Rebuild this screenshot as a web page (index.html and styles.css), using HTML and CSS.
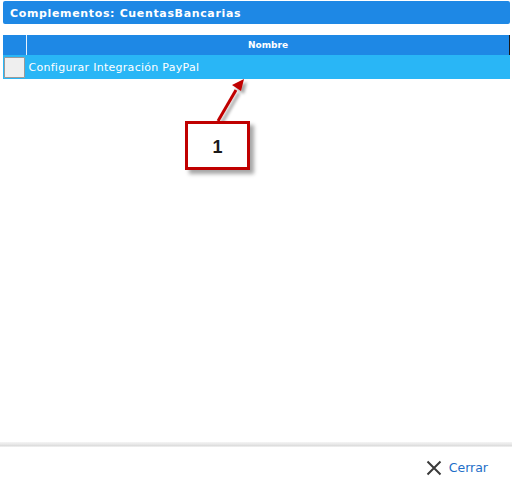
FILE: index.html
```html
<!DOCTYPE html>
<html lang="es">
<head>
<meta charset="utf-8">
<title>Complementos: CuentasBancarias</title>
<link rel="stylesheet" href="styles.css">
</head>
<body>
<div class="dialog">
  <div class="dialog-title">Complementos: CuentasBancarias</div>
  <div class="dialog-body">
    <table class="grid">
      <thead>
        <tr>
          <th class="col-check"></th>
          <th class="col-name">Nombre</th>
        </tr>
      </thead>
      <tbody>
        <tr class="selected">
          <td class="col-check"><span class="checkbox"></span></td>
          <td class="col-name">Configurar Integración PayPal</td>
        </tr>
      </tbody>
    </table>
  </div>
  <div class="dialog-footer">
    <button class="close-btn" type="button">
      <svg width="16" height="16" viewBox="0 0 16 16" aria-hidden="true">
        <path d="M1.5 1.5 L14.5 14.5 M14.5 1.5 L1.5 14.5" stroke="#3a3a3a" stroke-width="2" fill="none"/>
      </svg>
      <span>Cerrar</span>
    </button>
  </div>

  <!-- callout pointing at the selected row -->
  <svg class="callout-arrow" width="60" height="60" viewBox="0 0 60 60" aria-hidden="true">
    <defs>
      <filter id="arrowShadow" x="-30%" y="-30%" width="160%" height="160%">
        <feDropShadow dx="3" dy="3" stdDeviation="1.5" flood-color="#000" flood-opacity="0.35"/>
      </filter>
    </defs>
    <g filter="url(#arrowShadow)">
      <line x1="8" y1="46" x2="26" y2="15" stroke="#c00000" stroke-width="3"/>
      <polygon points="34,4 22,10 31,16" fill="#c00000"/>
    </g>
  </svg>
  <div class="callout-box">1</div>
</div>
</body>
</html>
```

FILE: styles.css
```css
html, body {
  margin: 0;
  padding: 0;
  background: #ffffff;
}

body {
  font-family: "DejaVu Sans", Verdana, sans-serif;
  width: 512px;
  height: 488px;
  overflow: hidden;
}

.dialog {
  position: relative;
  width: 512px;
  height: 488px;
  display: flex;
  flex-direction: column;
}

.dialog-title {
  margin: 1px 2px 0 3px;
  height: 23px;
  line-height: 25px;
  padding-left: 7px;
  background: #1e88e5;
  color: #ffffff;
  font-weight: bold;
  font-size: 11px;
  letter-spacing: 0.65px;
  border-radius: 2px;
}

.dialog-body {
  flex: 1;
  padding: 11px 2px 0 3px;
}

.grid {
  width: 100%;
  border-collapse: collapse;
  table-layout: fixed;
}

.grid th {
  height: 20px;
  padding: 0;
  background: #1e88e5;
  color: #ffffff;
  font-size: 9px;
  font-weight: bold;
  text-align: center;
}

.grid th.col-check {
  width: 23px;
  border-right: 1px solid #e8f2fc;
}

.grid th.col-name {
  border-right: 1px solid #1a1a1a;
}

.grid td {
  height: 24px;
  padding: 0;
  background: #29b6f6;
  color: #ffffff;
  font-size: 11px;
  letter-spacing: 0.28px;
}

.grid td.col-check {
  padding-left: 1px;
  vertical-align: middle;
}

.grid td.col-name {
  padding-left: 2px;
}

.checkbox {
  display: block;
  width: 19px;
  height: 19px;
  background: #efefef;
  border: 1px solid #9a9a9a;
  border-radius: 1px;
}

.dialog-footer {
  height: 41px;
  position: relative;
  background: linear-gradient(to bottom, #f4f4f4 0px, #e4e4e4 3px, #d8d8d8 4px, #ffffff 5px, #ffffff 100%);
  padding-top: 5px;
  display: flex;
  justify-content: flex-end;
  align-items: center;
  padding-right: 24px;
}

.close-btn {
  display: flex;
  align-items: center;
  gap: 7px;
  background: none;
  border: 0;
  padding: 0;
  font-family: "DejaVu Sans", Verdana, sans-serif;
  font-size: 12.5px;
  color: #1e6ec8;
  cursor: pointer;
}

.callout-arrow {
  position: absolute;
  left: 210px;
  top: 75px;
}

.callout-box {
  position: absolute;
  left: 185px;
  top: 121px;
  width: 59px;
  height: 43px;
  border: 3px solid #c00000;
  background: #ffffff;
  box-shadow: 4px 4px 4px rgba(0, 0, 0, 0.35);
  font-family: "Liberation Sans", Arial, sans-serif;
  font-weight: bold;
  font-size: 18px;
  line-height: 47px;
  text-align: center;
  color: #1a1a1a;
}
```
